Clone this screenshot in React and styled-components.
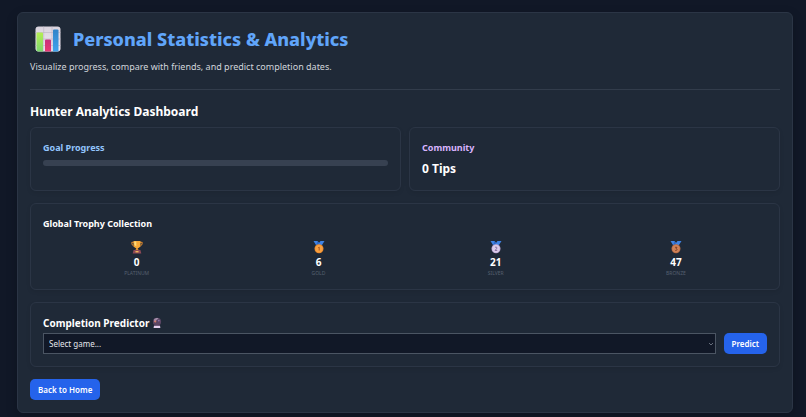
import { useId, useState } from "react";
import styled, { createGlobalStyle } from "styled-components";

const GlobalStyle = createGlobalStyle`
  *, *::before, *::after {
    box-sizing: border-box;
  }

  body {
    margin: 0;
    background-color: #111827;
    color: #ffffff;
    font-family: "Noto Sans", "Open Sans", sans-serif;
    font-size: 9px;
    line-height: 12px;
  }

  h1, h2, h3, p {
    margin: 0;
  }
`;

const TROPHIES = [
    { name: "Platinum", count: 0, icon: <TrophyIcon /> },
    { name: "Gold", count: 6, icon: <MedalIcon place={1} fill="#f9a03f" ring="#e8872b" ink="#a34d1c" /> },
    { name: "Silver", count: 21, icon: <MedalIcon place={2} fill="#dccdea" ring="#bfa9d6" ink="#7c6396" /> },
    { name: "Bronze", count: 47, icon: <MedalIcon place={3} fill="#cf8258" ring="#b56a45" ink="#7a3a22" /> },
];

function App() {
    return (
        <>
            <GlobalStyle />
            <Page>
                <Panel>
                    <Header>
                        <TitleRow>
                            <ChartIcon />
                            <Title>Personal Statistics &amp; Analytics</Title>
                        </TitleRow>
                        <Subtitle>Visualize progress, compare with friends, and predict completion dates.</Subtitle>
                    </Header>

                    <SectionTitle>Hunter Analytics Dashboard</SectionTitle>
                    <Sections>
                        <CardGrid>
                            <Card>
                                <CardTitle $color="#93c5fd">Goal Progress</CardTitle>
                                <ProgressBar value={0} />
                            </Card>
                            <Card>
                                <CardTitle $color="#d8b4fe">Community</CardTitle>
                                <TipCount>0 Tips</TipCount>
                            </Card>
                        </CardGrid>
                        <TrophyCollection />
                        <Predictor />
                    </Sections>
                    <Button type="button">Back to Home</Button>
                </Panel>
            </Page>
        </>
    );
}

export default App;

function ProgressBar({ value }) {
    return (
        <ProgressTrack role="progressbar" aria-label="Goal Progress" aria-valuenow={value}>
            <ProgressFill style={{ width: `${value}%` }} />
        </ProgressTrack>
    );
}

function TrophyCollection() {
    return (
        <Card>
            <CardTitle>Global Trophy Collection</CardTitle>
            <TrophyList>
                {TROPHIES.map(({ name, count, icon }) => (
                    <Trophy key={name}>
                        {icon}
                        <TrophyCount>{count}</TrophyCount>
                        <TrophyName>{name}</TrophyName>
                    </Trophy>
                ))}
            </TrophyList>
        </Card>
    );
}

function Predictor() {
    const id = useId();
    const [game, setGame] = useState("");

    return (
        <Card>
            <PredictorTitle>
                <label htmlFor={id}>Completion Predictor</label>
                <CrystalBallIcon />
            </PredictorTitle>
            <PredictorForm onSubmit={(e) => e.preventDefault()}>
                <SelectWrapper>
                    <Select id={id} value={game} onChange={(e) => setGame(e.target.value)}>
                        <option value="">Select game...</option>
                    </Select>
                    <Chevron viewBox="0 0 6 4" aria-hidden="true">
                        <path d="M1 1l2 2 2-2" fill="none" stroke="#7b8491" strokeWidth="0.8" />
                    </Chevron>
                </SelectWrapper>
                <Button type="submit">Predict</Button>
            </PredictorForm>
        </Card>
    );
}

function ChartIcon() {
    return (
        <svg width="26" height="26" viewBox="0 0 26 26" aria-hidden="true">
            <defs>
                <linearGradient id="chart-board" x1="0" y1="0" x2="0" y2="1">
                    <stop offset="0" stopColor="#d9d3dd" />
                    <stop offset="1" stopColor="#f1eaf3" />
                </linearGradient>
                <linearGradient id="chart-green" x1="0" y1="0" x2="0" y2="1">
                    <stop offset="0" stopColor="#b4ee52" />
                    <stop offset="1" stopColor="#7bd670" />
                </linearGradient>
                <linearGradient id="chart-pink" x1="0" y1="0" x2="0" y2="1">
                    <stop offset="0" stopColor="#c92f7c" />
                    <stop offset="1" stopColor="#ea3a72" />
                </linearGradient>
                <linearGradient id="chart-blue" x1="0" y1="0" x2="0" y2="1">
                    <stop offset="0" stopColor="#2f83c8" />
                    <stop offset="1" stopColor="#41a4ee" />
                </linearGradient>
                <clipPath id="chart-clip">
                    <rect x="0.5" y="0.5" width="25" height="25" rx="3" />
                </clipPath>
            </defs>
            <g clipPath="url(#chart-clip)">
                <rect width="26" height="26" fill="url(#chart-board)" />
                <path d="M0 6.5h26M0 13h26M0 19.5h26M8.7 0v26M17 0v26" stroke="#bbb3c2" strokeWidth="0.6" />
                <path d="M1.5 7.5a1 1 0 011-1H7a1 1 0 011 1V26H1.5z" fill="url(#chart-green)" />
                <path d="M10 14.5a1 1 0 011-1h4a1 1 0 011 1V26H10z" fill="url(#chart-pink)" />
                <path d="M18 4.5a1 1 0 011-1h3.5a1 1 0 011 1V26H18z" fill="url(#chart-blue)" />
            </g>
        </svg>
    );
}

function TrophyIcon() {
    return (
        <svg width="14" height="14" viewBox="0 0 14 14" aria-hidden="true">
            <path d="M4 2.3H1.8c0 2.6.9 3.8 2.8 4M10 2.3h2.2c0 2.6-.9 3.8-2.8 4" fill="none" stroke="#e58b2e" strokeWidth="1" />
            <path d="M3.5 1h7v3.4c0 2.3-1.3 3.8-3.5 3.8S3.5 6.7 3.5 4.4z" fill="#f6a938" />
            <path d="M4.3 1.4h2v4.8C5 5.8 4.3 5 4.3 3.8z" fill="#ffdc7c" />
            <path d="M6.2 8h1.6l.8 2.5H5.4z" fill="#e2912f" />
            <path d="M3.6 10h6.8l.9 3.5H2.7z" fill="#8f4a56" />
            <path d="M5.5 11h3v1.4h-3z" fill="#f0b65a" />
        </svg>
    );
}

function MedalIcon({ place, fill, ring, ink }) {
    const digits = {
        1: "M6.3 7.7l.9-.6v3.4",
        2: "M6 7.7c.5-.9 2-.7 2 .3C8 8.9 6.5 9.3 6 10.4h2.2",
        3: "M6 7.3h2L7 8.5c1.4 0 1.4 2-.1 2-.5 0-.8-.2-1-.5",
    };

    return (
        <svg width="14" height="14" viewBox="0 0 14 14" aria-hidden="true">
            <path d="M1.5 1h4L7 3l1.5-2h4L10 5H4z" fill="#3f83e4" />
            <path d="M5.5 1L7 3 5.5 5H4.3z" fill="#2e67c4" />
            <circle cx="7" cy="8.8" r="4.5" fill={ring} />
            <circle cx="7" cy="8.8" r="3.7" fill={fill} />
            <path d={digits[place]} fill="none" stroke={ink} strokeWidth="0.9" />
        </svg>
    );
}

function CrystalBallIcon() {
    return (
        <svg width="12" height="12" viewBox="0 0 12 12" aria-hidden="true">
            <circle cx="6" cy="4.8" r="4.1" fill="#5b4664" />
            <path d="M3 2.6c1-1.4 3-1.9 4.5-1.2C6 2.2 5.5 3.6 3.2 5.2z" fill="#a28da8" />
            <circle cx="4.3" cy="4.5" r="1" fill="#d97c66" />
            <circle cx="7.8" cy="3.6" r="0.9" fill="#8c6fa8" />
            <path d="M3.4 7.5c1.7 1.3 3.5 1.3 5.2 0l.4 1.8H3z" fill="#47304f" />
            <path d="M3 8.8h6l.4 2.2H2.6z" fill="#e5d2ef" />
        </svg>
    );
}

const Page = styled.main`
  padding: 12px 13px 4px 17px;
`;

const Panel = styled.div`
  padding: 12px;
  background-color: #1f2937;
  border: 1px solid #2b3545;
  border-radius: 6px;
  box-shadow: 0 4px 12px rgba(0, 0, 0, 0.2);
`;

const Header = styled.header`
  padding-bottom: 14px;
  margin-bottom: 12px;
  border-bottom: 1px solid #323c4b;
`;

const TitleRow = styled.div`
  display: flex;
  align-items: center;
  gap: 12px;
  height: 28px;
  padding-left: 5px;
`;

const Title = styled.h1`
  color: #60a5fa;
  font-size: 18px;
  font-weight: 800;
  line-height: 28px;
`;

const Subtitle = styled.p`
  margin-top: 5px;
  color: #d1d5db;
  font-size: 9px;
  line-height: 17px;
`;

const SectionTitle = styled.h2`
  margin-bottom: 5px;
  font-size: 12px;
  font-weight: 700;
  line-height: 20px;
`;

const Sections = styled.div`
  display: flex;
  flex-direction: column;
  gap: 12px;
  margin-bottom: 12px;
`;

const CardGrid = styled.div`
  display: grid;
  grid-template-columns: 1fr 1fr;
  gap: 8px;
`;

const Card = styled.section`
  padding: 12px;
  border: 1px solid #2b3545;
  border-radius: 6px;
  box-shadow: 0 2px 4px rgba(0, 0, 0, 0.08);
`;

const CardTitle = styled.h3`
  margin-bottom: 5px;
  color: ${({ $color }) => $color || "#ffffff"};
  font-size: 9px;
  font-weight: 700;
  line-height: 15px;
`;

const ProgressTrack = styled.div`
  height: 6px;
  overflow: hidden;
  background-color: #374151;
  border-radius: 3px;
`;

const ProgressFill = styled.div`
  height: 100%;
  background-color: #3b82f6;
`;

const TipCount = styled.p`
  font-size: 12px;
  font-weight: 700;
  line-height: 18px;
`;

const TrophyList = styled.ul`
  display: flex;
  justify-content: space-around;
  margin: 9px 0 0;
  padding: 0;
  list-style: none;
`;

const Trophy = styled.li`
  display: flex;
  flex-direction: column;
  align-items: center;
`;

const TrophyCount = styled.span`
  font-size: 10px;
  font-weight: 700;
  line-height: 16px;
`;

const TrophyName = styled.span`
  color: #566070;
  font-size: 5px;
  line-height: 7px;
  text-transform: uppercase;
`;

const PredictorTitle = styled.h3`
  display: flex;
  align-items: center;
  gap: 2px;
  margin-bottom: 2px;
  font-size: 10px;
  font-weight: 700;
  line-height: 16px;
`;

const PredictorForm = styled.form`
  display: flex;
  gap: 8px;
`;

const SelectWrapper = styled.div`
  position: relative;
  flex: 1;
`;

const Select = styled.select`
  display: block;
  appearance: none;
  width: 100%;
  height: 21px;
  padding: 0 5px;
  color: #e5e7eb;
  background-color: #111827;
  border: 1px solid #4b5563;
  border-radius: 0;
  font-family: inherit;
  font-size: 8px;
`;

const Chevron = styled.svg`
  position: absolute;
  top: 9px;
  right: 2px;
  width: 6px;
  height: 4px;
  pointer-events: none;
`;

const Button = styled.button`
  height: 21px;
  padding: 0 8px;
  color: #ffffff;
  background-color: #2563eb;
  border: 0;
  border-radius: 5px;
  font-family: inherit;
  font-size: 8px;
  font-weight: 600;
  cursor: pointer;
`;
